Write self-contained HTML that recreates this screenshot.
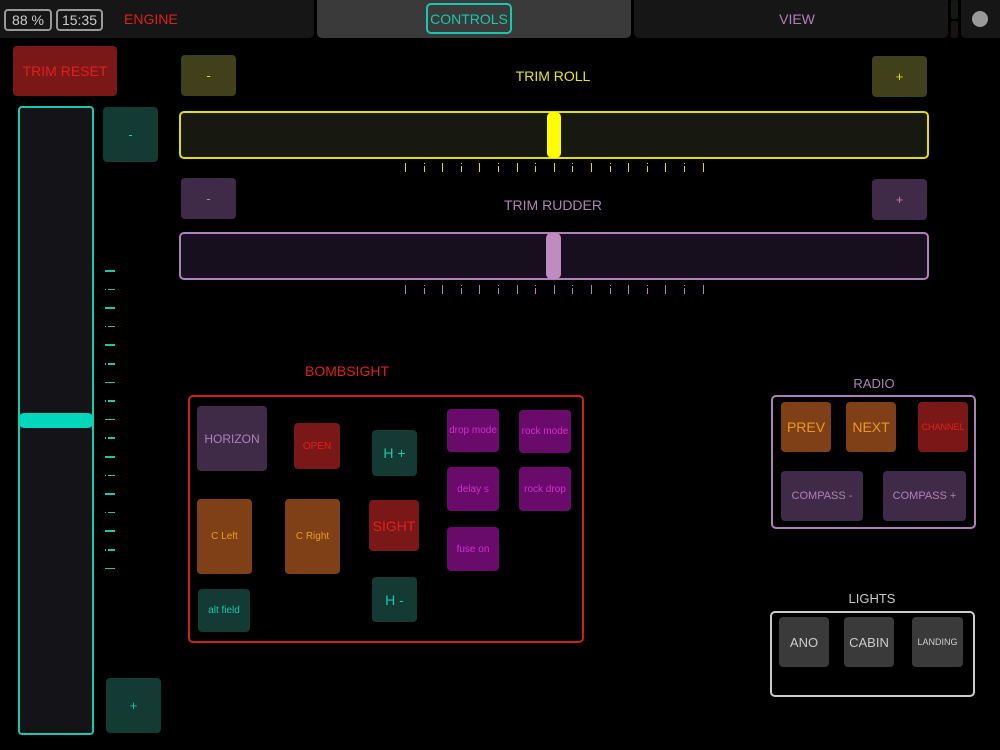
<!DOCTYPE html>
<html><head><meta charset="utf-8"><style>
*{margin:0;padding:0;box-sizing:border-box}
body{width:1000px;height:750px;background:#000;position:relative;overflow:hidden;font-family:"Liberation Sans",sans-serif}
div{position:absolute}
.b{display:flex;align-items:center;justify-content:center;border-radius:4px;text-align:center}
.c{display:flex;align-items:center;justify-content:center}
.tk{width:1px;background:currentColor}
</style></head><body>
<div style="left:0;top:0;width:314px;height:38px;background:#161616;border-radius:0 0 5px 0"></div>
<div style="left:317px;top:0;width:314px;height:38px;background:#3a3a3a;border-radius:0 0 5px 5px"></div>
<div style="left:634px;top:0;width:314px;height:38px;background:#161616;border-radius:0 0 5px 5px"></div>
<div style="left:951px;top:0;width:7px;height:19px;background:#121a12;border-radius:2px"></div>
<div style="left:951px;top:21px;width:7px;height:17px;background:#1a1212;border-radius:2px"></div>
<div style="left:961px;top:0;width:39px;height:38px;background:#161616;border-radius:0 0 0 5px"></div>
<div style="left:972px;top:11px;width:16px;height:16px;border-radius:50%;background:#999"></div>
<div class="b" style="left:4px;top:9px;width:48px;height:22px;border:2px solid #999;color:#ccc;font-size:14px">88 %</div>
<div class="b" style="left:56px;top:9px;width:47px;height:22px;border:2px solid #999;color:#ccc;font-size:14px">15:35</div>
<div style="left:124px;top:11px;color:#e0201c;font-size:14px">ENGINE</div>
<div class="b" style="left:426px;top:3px;width:86px;height:31px;border:2px solid #18c8b0;border-radius:5px;color:#18c8b0;font-size:14px">CONTROLS</div>
<div class="c" style="left:640px;top:0;width:314px;height:38px;color:#b080b8;font-size:14px">VIEW</div>

<div class="b" style="left:13px;top:46px;width:104px;height:50px;background:#7a1818;color:#e0201c;font-size:14px">TRIM RESET</div>
<div style="left:18px;top:106px;width:76px;height:629px;border:2px solid #18c8b0;border-radius:4px;background:#131318"></div>
<div style="left:19px;top:413px;width:74px;height:15px;border-radius:5px;background:#00d8bc"></div>
<div class="b" style="left:103px;top:107px;width:55px;height:55px;background:#133a33;color:#18c8b0;font-size:13px">-</div>
<div class="b" style="left:106px;top:678px;width:55px;height:55px;background:#133a33;color:#18c8b0;font-size:13px">+</div>
<div id="vt" style="left:105px;top:0;color:#18c8b0"></div>

<div class="b" style="left:181px;top:55px;width:55px;height:41px;background:#40401a;color:#e0e000;font-size:13px">-</div>
<div class="b" style="left:872px;top:56px;width:55px;height:41px;background:#40401a;color:#e0e000;font-size:13px">+</div>
<div class="c" style="left:400px;top:66px;width:306px;height:20px;color:#e8e800;font-size:14px">TRIM ROLL</div>
<div style="left:179px;top:111px;width:750px;height:48px;border:2px solid #e0e000;border-radius:5px;background:#17180f"></div>
<div style="left:547px;top:112px;width:14px;height:46px;border-radius:5px;background:#ffff00"></div>
<div id="t1" style="left:0;top:163px;color:#e0e000"></div>

<div class="b" style="left:181px;top:178px;width:55px;height:41px;background:#3f2b48;color:#b080b8;font-size:13px">-</div>
<div class="b" style="left:872px;top:179px;width:55px;height:41px;background:#3f2b48;color:#b080b8;font-size:13px">+</div>
<div class="c" style="left:400px;top:195px;width:306px;height:20px;color:#b080b8;font-size:14px">TRIM RUDDER</div>
<div style="left:179px;top:232px;width:750px;height:48px;border:2px solid #b080b8;border-radius:5px;background:#170e1e"></div>
<div style="left:546px;top:233px;width:15px;height:46px;border-radius:5px;background:#c08cc0"></div>
<div id="t2" style="left:0;top:285px;color:#b080b8"></div>

<div class="c" style="left:280px;top:362px;width:134px;height:18px;color:#e0201c;font-size:14px">BOMBSIGHT</div>
<div style="left:188px;top:395px;width:396px;height:248px;border:2px solid #d02020;border-radius:5px"></div>
<div class="b" style="left:197px;top:406px;width:70px;height:65px;background:#3f2b48;color:#b080b8;font-size:12px">HORIZON</div>
<div class="b" style="left:294px;top:423px;width:46px;height:46px;background:#7a1818;color:#e0201c;font-size:10px">OPEN</div>
<div class="b" style="left:372px;top:430px;width:45px;height:46px;background:#133a33;color:#18c8b0;font-size:14px">H +</div>
<div class="b" style="left:447px;top:409px;width:52px;height:43px;background:#6a0a6a;color:#d030d0;font-size:10px">drop mode</div>
<div class="b" style="left:519px;top:410px;width:52px;height:43px;background:#6a0a6a;color:#d030d0;font-size:10px">rock mode</div>
<div class="b" style="left:447px;top:467px;width:52px;height:44px;background:#6a0a6a;color:#d030d0;font-size:10px">delay s</div>
<div class="b" style="left:519px;top:467px;width:52px;height:44px;background:#6a0a6a;color:#d030d0;font-size:10px">rock drop</div>
<div class="b" style="left:447px;top:527px;width:52px;height:44px;background:#6a0a6a;color:#d030d0;font-size:10px">fuse on</div>
<div class="b" style="left:197px;top:499px;width:55px;height:75px;background:#7f4017;color:#e89a20;font-size:10px">C Left</div>
<div class="b" style="left:285px;top:499px;width:55px;height:75px;background:#7f4017;color:#e89a20;font-size:10px">C Right</div>
<div class="b" style="left:369px;top:500px;width:50px;height:51px;background:#7a1818;color:#e0201c;font-size:14px">SIGHT</div>
<div class="b" style="left:372px;top:577px;width:45px;height:45px;background:#133a33;color:#18c8b0;font-size:14px">H -</div>
<div class="b" style="left:198px;top:589px;width:52px;height:43px;background:#133a33;color:#18c8b0;font-size:10px">alt field</div>

<div class="c" style="left:810px;top:374px;width:128px;height:18px;color:#b080b8;font-size:13px">RADIO</div>
<div style="left:771px;top:395px;width:205px;height:134px;border:2px solid #b080b8;border-radius:5px"></div>
<div class="b" style="left:781px;top:402px;width:50px;height:50px;background:#7f4017;color:#e89a20;font-size:14px">PREV</div>
<div class="b" style="left:846px;top:402px;width:50px;height:50px;background:#7f4017;color:#e89a20;font-size:14px">NEXT</div>
<div class="b" style="left:918px;top:402px;width:50px;height:50px;background:#7a1818;color:#e0201c;font-size:9px">CHANNEL</div>
<div class="b" style="left:781px;top:471px;width:82px;height:50px;background:#3f2b48;color:#b080b8;font-size:11px">COMPASS -</div>
<div class="b" style="left:883px;top:471px;width:83px;height:50px;background:#3f2b48;color:#b080b8;font-size:11px">COMPASS +</div>

<div class="c" style="left:810px;top:589px;width:124px;height:18px;color:#ccc;font-size:13px">LIGHTS</div>
<div style="left:770px;top:611px;width:205px;height:86px;border:2px solid #ccc;border-radius:5px"></div>
<div class="b" style="left:779px;top:617px;width:50px;height:50px;background:#3a3a3a;color:#ccc;font-size:13px">ANO</div>
<div class="b" style="left:844px;top:617px;width:50px;height:50px;background:#3a3a3a;color:#ccc;font-size:13px">CABIN</div>
<div class="b" style="left:912px;top:617px;width:51px;height:50px;background:#3a3a3a;color:#ccc;font-size:9px">LANDING</div>
<script>
function ticks(id){var e=document.getElementById(id),h='';for(var i=0;i<17;i++){var x=405+i*18.6;if(i%2==0)h+='<div class="tk" style="left:'+x+'px;top:0;height:9px"></div>';else h+='<div class="tk" style="left:'+x+'px;top:0;height:1px"></div><div class="tk" style="left:'+x+'px;top:3px;height:6px"></div>';}e.innerHTML=h;}
ticks('t1');ticks('t2');
var v=document.getElementById('vt'),h='';for(var i=0;i<17;i++){var y=270+i*18.6;if(i%2==0)h+='<div style="left:0;top:'+y+'px;width:10px;height:1.5px;background:currentColor"></div>';else h+='<div style="left:0;top:'+y+'px;width:1px;height:1.5px;background:currentColor"></div><div style="left:3px;top:'+y+'px;width:7px;height:1.5px;background:currentColor"></div>';}v.innerHTML=h;
</script>
</body></html>
